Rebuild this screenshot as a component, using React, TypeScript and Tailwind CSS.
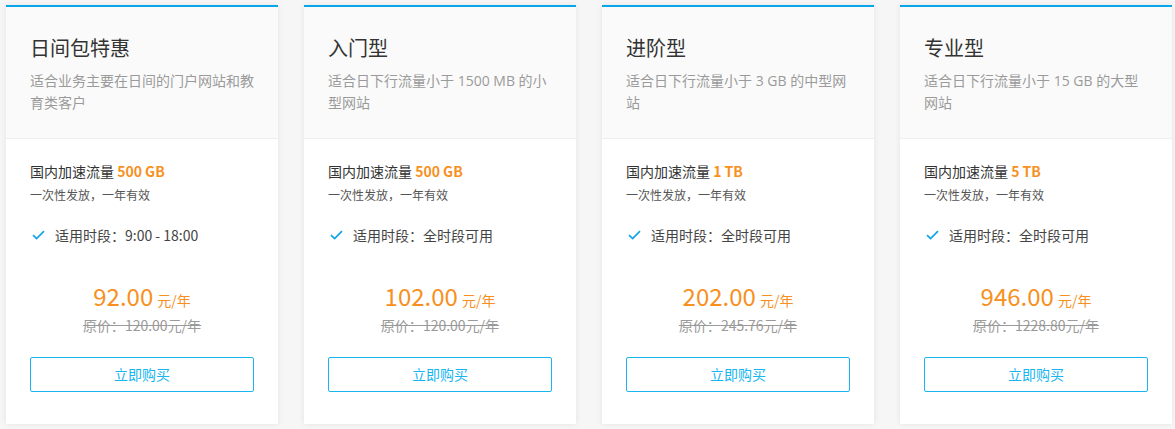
import React from "react";

type Plan = {
  title: string;
  desc: string;
  amount: string;
  period: string;
  price: string;
  orig: string;
};

const plans: Plan[] = [
  {
    title: "日间包特惠",
    desc: "适合业务主要在日间的门户网站和教育类客户",
    amount: "500 GB",
    period: "9:00 - 18:00",
    price: "92.00",
    orig: "120.00",
  },
  {
    title: "入门型",
    desc: "适合日下行流量小于 1500 MB 的小型网站",
    amount: "500 GB",
    period: "全时段可用",
    price: "102.00",
    orig: "120.00",
  },
  {
    title: "进阶型",
    desc: "适合日下行流量小于 3 GB 的中型网站",
    amount: "1 TB",
    period: "全时段可用",
    price: "202.00",
    orig: "245.76",
  },
  {
    title: "专业型",
    desc: "适合日下行流量小于 15 GB 的大型网站",
    amount: "5 TB",
    period: "全时段可用",
    price: "946.00",
    orig: "1228.80",
  },
];

function Check() {
  return (
    <svg width="13" height="10" viewBox="0 0 13 10" className="shrink-0">
      <path d="M1 5.2 L4.6 8.6 L12 1.2" fill="none" stroke="#10a6e6" strokeWidth="1.7" />
    </svg>
  );
}

function Card({ p }: { p: Plan }) {
  return (
    <div className="w-[272px] shrink-0 bg-white border-t-2 border-[#07a6e8] shadow-[0_0_6px_rgba(0,0,0,0.08)]">
      <div className="bg-[#fafafa] border-b border-[#eeeeee] pt-[27px] pb-[24px] px-[24px]">
        <div className="text-[20px] leading-[28px] text-[#333]">{p.title}</div>
        <div
          className="mt-[8px] text-[14px] leading-[22px] text-[#9a9a9a]"
          style={{ fontFamily: '"Open Sans", "Noto Sans CJK SC", sans-serif' }}
        >
          {p.desc}
        </div>
      </div>
      <div className="pt-[22px] pb-[32px] px-[24px]">
        <div className="text-[14px] leading-[20px] text-[#333]">
          国内加速流量 <span className="font-semibold text-[#f7901e]">{p.amount}</span>
        </div>
        <div className="mt-[4px] text-[12px] leading-[20px] text-[#555]">一次性发放，一年有效</div>
        <div className="mt-[20px] flex items-center gap-[10px] pl-[2px] text-[14px] leading-[20px] text-[#444]">
          <Check />
          <span>适用时段：{p.period}</span>
        </div>
        <div className="mt-[36px] flex items-baseline justify-center text-[#f7901e]">
          <span className="text-[24px] leading-[30px]">{p.price}</span>
          <span className="ml-[4px] text-[14px]">元/年</span>
        </div>
        <div className="mt-[4px] text-center text-[14px] leading-[20px] text-[#9a9a9a] line-through">
          原价：{p.orig}元/年
        </div>
        <button className="mt-[22px] w-full h-[35px] border border-[#19b5f0] rounded-[2px] bg-white text-[14px] text-[#19b5f0]">
          立即购买
        </button>
      </div>
    </div>
  );
}

export default function App() {
  return (
    <div
      className="w-[1175px] h-[429px] bg-[#f6f6f6] pt-[5px] pl-[6px] flex gap-[26px] items-start"
      style={{ fontFamily: '"Noto Sans CJK SC", "Noto Sans", sans-serif' }}
    >
      {plans.map((p) => (
        <Card key={p.title} p={p} />
      ))}
    </div>
  );
}
